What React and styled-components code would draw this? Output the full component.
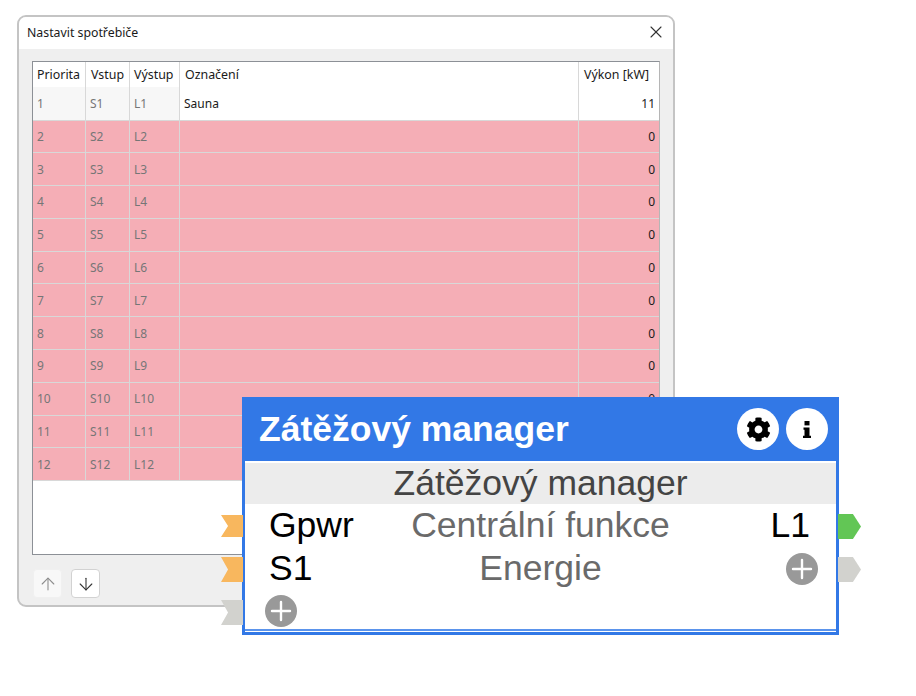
import styled, { createGlobalStyle } from 'styled-components';
import { X, ArrowUp, ArrowDown } from 'lucide-react';
import { FaCog } from 'react-icons/fa';

const GlobalStyle = createGlobalStyle`
  html, body { margin: 0; padding: 0; background: #fff; }
  body { font-family: "Noto Sans", "Open Sans", sans-serif; }
`;

const Page = styled.div`
  position: relative;
  width: 916px;
  height: 696px;
  padding: 15px 0 0 17px;
  box-sizing: border-box;
  overflow: hidden;
`;

const Dialog = styled.div`
  width: 658px;
  height: 592px;
  box-sizing: border-box;
  border: 2px solid #c4c4c4;
  border-radius: 9px;
  background: #efefef;
  display: flex;
  flex-direction: column;
  overflow: hidden;
`;

const TitleBar = styled.div`
  height: 32px;
  flex: none;
  background: #fff;
  display: flex;
  align-items: center;
  justify-content: space-between;
  padding: 0 7px 2px 8px;
  box-sizing: border-box;
  font-size: 12.3px;
  color: #1a1a1a;
`;

const CloseBtn = styled.span`
  display: flex;
  color: #333;
`;

const Body = styled.div`
  flex: 1;
  display: flex;
  flex-direction: column;
  padding: 12px 13px 0 13px;
`;

const Grid = styled.div`
  height: 494px;
  box-sizing: border-box;
  flex: none;
  background: #fff;
  border: 1px solid #8c9096;
  border-right-color: #b5b5b5;
  font-size: 12px;
`;

const Row = styled.div`
  display: grid;
  grid-template-columns: 53px 44px 50px 399px 80px;
  height: ${({ $h }) => $h}px;
  box-sizing: border-box;
  border-bottom: ${({ $head }) => ($head ? 'none' : '1px solid #d8d8d8')};
  background: ${({ $bad }) => ($bad ? '#f5aeb6' : '#fff')};
`;

const Cell = styled.div`
  display: flex;
  align-items: center;
  justify-content: ${({ $right }) => ($right ? 'flex-end' : 'flex-start')};
  padding: ${({ $right }) => ($right ? '0 4px 0 0' : '0 0 0 4px')};
  border-right: ${({ $last }) => ($last ? 'none' : '1px solid #d8d8d8')};
  color: ${({ $muted }) => ($muted ? '#767676' : '#1a1a1a')};
  background: ${({ $fixed }) => ($fixed ? '#f7f7f7' : 'transparent')};
  min-width: 0;
  white-space: nowrap;
`;

const HeadCell = styled(Cell)`
  color: #1a1a1a;
  font-size: 12.4px;
  padding-left: ${({ $inset }) => ($inset ? 5 : 4)}px;
`;

const Toolbar = styled.div`
  display: flex;
  gap: 9px;
  padding: 14px 0 0 1px;
`;

const ToolBtn = styled.button`
  width: 29px;
  height: 29px;
  padding: 0;
  display: flex;
  align-items: center;
  justify-content: center;
  border-radius: 4px;
  border: 1px solid ${({ disabled }) => (disabled ? '#f0f0f0' : '#d2d2d2')};
  background: ${({ disabled }) => (disabled ? '#f8f8f8' : '#fff')};
  color: ${({ disabled }) => (disabled ? '#8d8d8d' : '#333')};
`;

const Node = styled.div`
  position: absolute;
  left: 242px;
  top: 397px;
  width: 597px;
  height: 238px;
  box-sizing: border-box;
  border: 3px solid #3278e6;
  border-top: none;
  background: #fff;
  font-family: "Liberation Sans", Arial, sans-serif;
  font-size: 35.5px;
  box-shadow: inset 0 -1px 0 #fff, inset 0 -3px 0 #5b94ec;
`;

const NodeHeader = styled.div`
  height: 64px;
  margin: 0 -3px;
  padding: 0 11px 0 17px;
  background: #3278e6;
  display: flex;
  align-items: center;
  justify-content: space-between;
  color: #fff;
  font-weight: 700;
  font-size: 35.5px;
`;

const HeaderIcons = styled.div`
  display: flex;
  gap: 7px;
`;

const RoundIcon = styled.div`
  width: 42px;
  height: 42px;
  border-radius: 50%;
  background: #fff;
  color: #000;
  display: flex;
  align-items: center;
  justify-content: center;
`;

const NodeCaption = styled.div`
  height: 41px;
  margin-top: 2px;
  background: #ececec;
  color: #444;
  text-align: center;
  line-height: 41px;
`;

const NodeRow = styled.div`
  position: relative;
  height: 43px;
  display: grid;
  grid-template-columns: 1fr 1fr 1fr;
  align-items: center;
  padding: 0 24px;
  white-space: nowrap;
  color: #000;
`;

const Center = styled.div`
  justify-self: center;
  color: #6a6a6a;
`;

const RightSlot = styled.div`
  justify-self: end;
  display: flex;
  margin-right: 2px;
`;

const Port = styled.span`
  position: absolute;
  top: ${({ $short }) => ($short ? 11 : 10)}px;
  height: ${({ $short }) => ($short ? 22 : 25)}px;
  background: ${({ $color }) => $color};
  ${({ $side }) =>
    $side === 'left'
      ? `left: -24px; width: 22px; clip-path: polygon(0 0, 100% 0, 100% 100%, 0 100%, 32% 50%);`
      : `right: -25px; width: 23px; clip-path: polygon(0 0, 65% 0, 100% 50%, 65% 100%, 0 100%);`}
`;

const AddBtn = styled.span`
  width: 32px;
  height: 32px;
  border-radius: 50%;
  background: #999;
  display: flex;
  align-items: center;
  justify-content: center;
  margin-left: ${({ $left }) => ($left ? '-4px' : '0')};
  margin-right: ${({ $left }) => ($left ? '0' : '-8px')};
  margin-top: ${({ $left }) => ($left ? '-2px' : '0')};
`;

function Plus() {
  return (
    <svg width="22" height="22" viewBox="0 0 22 22">
      <path d="M11 2v18M2 11h18" stroke="#fff" strokeWidth="2.4" strokeLinecap="round" />
    </svg>
  );
}

function Info() {
  return (
    <svg width="8" height="17" viewBox="0 0 8 17">
      <rect x="1.5" y="0" width="5" height="4.4" />
      <path d="M0.5 6.5h6v8.2h1.5V17H0v-2.3h1.5V8.8H0.5z" />
    </svg>
  );
}

const rows = Array.from({ length: 12 }, (_, i) => ({
  id: i + 1,
  name: i === 0 ? 'Sauna' : '',
  power: i === 0 ? 11 : 0,
}));

export default function App() {
  return (
    <Page>
      <GlobalStyle />
      <Dialog>
        <TitleBar>
          Nastavit spotřebiče
          <CloseBtn>
            <X size={20} strokeWidth={1.3} />
          </CloseBtn>
        </TitleBar>
        <Body>
          <Grid>
            <Row $head $h={25}>
              <HeadCell>Priorita</HeadCell>
              <HeadCell $inset>Vstup</HeadCell>
              <HeadCell>Výstup</HeadCell>
              <HeadCell $inset>Označení</HeadCell>
              <HeadCell $inset $last>Výkon [kW]</HeadCell>
            </Row>
            {rows.map((r) => (
              <Row key={r.id} $h={r.id === 1 ? 33.5 : 32.8} $bad={r.id > 1}>
                <Cell $muted $fixed={r.id === 1}>{r.id}</Cell>
                <Cell $muted $fixed={r.id === 1}>S{r.id}</Cell>
                <Cell $muted $fixed={r.id === 1}>L{r.id}</Cell>
                <Cell>{r.name}</Cell>
                <Cell $right $last>{r.power}</Cell>
              </Row>
            ))}
          </Grid>
          <Toolbar>
            <ToolBtn disabled>
              <ArrowUp size={20} strokeWidth={1.3} />
            </ToolBtn>
            <ToolBtn>
              <ArrowDown size={20} strokeWidth={1.3} />
            </ToolBtn>
          </Toolbar>
        </Body>
      </Dialog>

      <Node>
        <NodeHeader>
          Zátěžový manager
          <HeaderIcons>
            <RoundIcon><FaCog size={25} /></RoundIcon>
            <RoundIcon><Info /></RoundIcon>
          </HeaderIcons>
        </NodeHeader>
        <NodeCaption>Zátěžový manager</NodeCaption>
        <NodeRow>
          <Port $side="left" $short $color="#f8b75e" />
          <span>Gpwr</span>
          <Center>Centrální funkce</Center>
          <RightSlot>L1</RightSlot>
          <Port $side="right" $color="#62c655" />
        </NodeRow>
        <NodeRow>
          <Port $side="left" $color="#f8b75e" />
          <span>S1</span>
          <Center>Energie</Center>
          <RightSlot>
            <AddBtn><Plus /></AddBtn>
          </RightSlot>
          <Port $side="right" $color="#d2d2ce" />
        </NodeRow>
        <NodeRow>
          <Port $side="left" $color="#d2d2ce" />
          <AddBtn $left><Plus /></AddBtn>
        </NodeRow>
      </Node>
    </Page>
  );
}
